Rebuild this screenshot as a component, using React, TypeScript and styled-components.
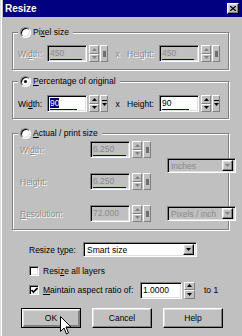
import React from "react";
import styled, { createGlobalStyle, css } from "styled-components";

const GlobalStyle = createGlobalStyle`
  html, body { margin: 0; padding: 0; background: #c0c0c0; }
  body { font-family: "Liberation Sans", Arial, sans-serif; font-size: 8.5px; color: #000; }
  * { box-sizing: border-box; }
`;

const raised = css`
  background: #c0c0c0;
  border: 1px solid;
  border-color: #fff #000 #000 #fff;
  box-shadow: inset -1px -1px 0 #808080, inset 1px 1px 0 #dfdfdf;
`;

const raisedThin = css`
  background: #c0c0c0;
  border: 1px solid;
  border-color: #fff #808080 #808080 #fff;
`;

const sunken = css`
  border: 1px solid;
  border-color: #808080 #fff #fff #808080;
  box-shadow: inset 1px 1px 0 #000, inset -1px -1px 0 #dfdfdf;
`;

const disabledText = css`
  color: #8a8a8a;
  text-shadow: 1px 1px 0 #fff;
`;

const Arrow = ({ dir, off }: { dir: "up" | "down"; off?: boolean }) => (
  <svg width="5" height="3" viewBox="0 0 5 3">
    <polygon
      points={dir === "up" ? "2.5,0 5,3 0,3" : "0,0 5,0 2.5,3"}
      fill={off ? "#808080" : "#000"}
    />
  </svg>
);

const Window = styled.div`
  position: relative;
  width: 242px;
  height: 336px;
  background: #c0c0c0;
  border-left: 1px solid #dfdfdf;
  box-shadow: inset 1px 0 0 #fff;
  padding-left: 2px;
  overflow: hidden;
`;

const TitleBar = styled.div`
  height: 17px;
  background: #000080;
  color: #fff;
  display: flex;
  align-items: center;
  justify-content: space-between;
  padding: 0 3px 0 2px;
  font-weight: bold;
  font-size: 10px;
`;

const CloseBtn = styled.div`
  ${raised};
  width: 12px;
  height: 11px;
  display: flex;
  align-items: center;
  justify-content: center;
`;

const Content = styled.div`
  padding: 0 13px 0 9px;
  display: flex;
  flex-direction: column;
`;

const Group = styled.fieldset<{ $mt: number; $pt: number; $pb: number }>`
  margin: ${(p) => p.$mt}px 0 0;
  padding: ${(p) => p.$pt}px 8px ${(p) => p.$pb}px 5px;
  border: 1px solid #808080;
  box-shadow: inset 1px 1px 0 #fff, 1px 1px 0 #fff;
  min-width: 0;
`;

const Legend = styled.legend`
  padding: 0 4px 0 2px;
  background: #c0c0c0;
  height: 12px;
`;

const LegendInner = styled.span`
  display: flex;
  align-items: center;
  gap: 2px;
  height: 12px;
  line-height: 12px;
`;

const Radio = styled.span<{ $checked?: boolean }>`
  width: 11px;
  height: 11px;
  border-radius: 50%;
  background: #fff;
  border: 1px solid;
  border-color: #808080 #fff #fff #808080;
  box-shadow: inset 1px 1px 0 #000, inset -1px -1px 0 #dfdfdf;
  display: flex;
  align-items: center;
  justify-content: center;
  &::after {
    content: "";
    width: 3px;
    height: 3px;
    border-radius: 50%;
    background: #000;
    display: ${(p) => (p.$checked ? "block" : "none")};
  }
`;

const Row = styled.div`
  display: flex;
  align-items: center;
  height: 17px;
`;

const Label = styled.span<{ $w: number; $off?: boolean; $pl?: number }>`
  width: ${(p) => p.$w}px;
  padding-left: ${(p) => p.$pl ?? 0}px;
  white-space: nowrap;
  ${(p) => p.$off && disabledText};
`;

const Times = styled.span<{ $off?: boolean }>`
  width: 19px;
  text-align: center;
  ${(p) => p.$off && disabledText};
`;

const NumWrap = styled.div`
  display: flex;
  align-items: stretch;
  height: 17px;
`;

const Edit = styled.div<{ $w: number; $off?: boolean }>`
  ${sunken};
  width: ${(p) => p.$w}px;
  background: ${(p) => (p.$off ? "#c0c0c0" : "#fff")};
  display: flex;
  flex-direction: column;
  justify-content: space-between;
  padding: 2px 1px 1px 2px;
  line-height: 11px;
  ${(p) => p.$off && "color: #8a8a8a;"};
`;

const Selected = styled.span`
  background: #000080;
  color: #fff;
`;

const Bar = styled.div`
  height: 2px;
  background: #000080;
`;

const Spinner = styled.div<{ $w: number }>`
  width: ${(p) => p.$w}px;
  margin-left: 2px;
  display: flex;
  flex-direction: column;
`;

const SpinBtn = styled.div`
  ${raisedThin};
  flex: 1;
  display: flex;
  align-items: center;
  justify-content: center;
`;

const MoreBtn = styled.div`
  ${raisedThin};
  width: 8px;
  margin-left: 1px;
  display: flex;
  align-items: center;
  justify-content: center;
`;

const Grid3 = styled.div`
  display: grid;
  grid-template-columns: 56px 61px 69px;
  grid-template-rows: 17px 17px 17px;
  column-gap: 16px;
  row-gap: 15px;
  align-items: center;
`;

const Combo = styled.div<{ $w: number; $off?: boolean; $span?: boolean }>`
  ${sunken};
  width: ${(p) => p.$w}px;
  height: 15px;
  background: ${(p) => (p.$off ? "#c0c0c0" : "#fff")};
  display: flex;
  align-items: center;
  justify-content: space-between;
  padding: 2px 2px 2px 3px;
  ${(p) => p.$off && "color: #8a8a8a;"};
  ${(p) => p.$span && "grid-column: 3; grid-row: 1 / 3; align-self: center;"};
`;

const ComboBtn = styled.div`
  ${raised};
  width: 11px;
  height: 11px;
  display: flex;
  align-items: center;
  justify-content: center;
`;

const OptRow = styled.div<{ $mt: number; $h: number }>`
  margin-top: ${(p) => p.$mt}px;
  height: ${(p) => p.$h}px;
  padding-left: 17px;
  display: flex;
  align-items: center;
`;

const Check = styled.span`
  ${sunken};
  width: 10px;
  height: 10px;
  background: #fff;
  margin-right: 4px;
  display: flex;
  align-items: center;
  justify-content: center;
`;

const ToOne = styled.span`
  margin-left: 9px;
`;

const Buttons = styled.div`
  margin-top: 10px;
  padding-left: 9px;
  display: flex;
  gap: 11px;
`;

const Button = styled.div<{ $default?: boolean }>`
  width: 60px;
  height: 20px;
  display: flex;
  align-items: center;
  justify-content: center;
  ${raised};
  ${(p) =>
    p.$default &&
    css`
      border: 1px solid #000;
      box-shadow: inset 1px 1px 0 #fff, inset -1px -1px 0 #808080,
        inset 2px 2px 0 #dfdfdf, inset -2px -2px 0 #808080;
    `};
`;

const Cursor = styled.svg`
  position: absolute;
  left: 59px;
  top: 316px;
`;

type NumProps = { value: string; off?: boolean; bar?: number; sel?: boolean; w?: number; more?: boolean };

const NumField = ({ value, off, bar = 0, sel, w = 40, more = true }: NumProps) => (
  <NumWrap>
    <Edit $w={w} $off={off}>
      <span>{sel ? <Selected>{value}</Selected> : value}</span>
      <Bar style={{ width: `${bar}%` }} />
    </Edit>
    <Spinner $w={more ? 10 : 11}>
      <SpinBtn>
        <Arrow dir="up" off={off} />
      </SpinBtn>
      <SpinBtn>
        <Arrow dir="down" off={off} />
      </SpinBtn>
    </Spinner>
    {more && (
      <MoreBtn>
        {off ? (
          <svg width="3" height="6">
            <rect width="3" height="6" fill="#6e6e6e" />
          </svg>
        ) : (
          <svg width="5" height="7" viewBox="0 0 5 7">
            <rect x="0" y="0" width="5" height="1" fill="#000" />
            <polygon points="0,3 5,3 2.5,6" fill="#000" />
          </svg>
        )}
      </MoreBtn>
    )}
  </NumWrap>
);

const App = () => {
  return (
    <Window>
      <GlobalStyle />
      <TitleBar>
        <span>Resize</span>
        <CloseBtn>
          <svg width="6" height="5" viewBox="0 0 6 5">
            <path d="M0 0 L6 5 M6 0 L0 5" stroke="#000" strokeWidth="1.3" />
          </svg>
        </CloseBtn>
      </TitleBar>
      <Content>
        <Group $mt={9} $pt={7} $pb={7}>
          <Legend>
            <LegendInner>
              <Radio />
              <span>
                Pi<u>x</u>el size
              </span>
            </LegendInner>
          </Legend>
          <Row>
            <Label $w={29} $off>
              Wi<u>d</u>th:
            </Label>
            <NumField value="450" off bar={92} />
            <Times $off>x</Times>
            <Label $w={32} $off>
              Hei<u>g</u>ht:
            </Label>
            <NumField value="450" off bar={92} />
          </Row>
        </Group>

        <Group $mt={5} $pt={8} $pb={6}>
          <Legend>
            <LegendInner>
              <Radio $checked />
              <span>
                <u>P</u>ercentage of original
              </span>
            </LegendInner>
          </Legend>
          <Row>
            <Label $w={29}>
              Wi<u>d</u>th:
            </Label>
            <NumField value="90" sel bar={78} />
            <Times>x</Times>
            <Label $w={32}>
              Hei<u>g</u>ht:
            </Label>
            <NumField value="90" bar={78} />
          </Row>
        </Group>

        <Group $mt={8} $pt={2} $pb={7}>
          <Legend>
            <LegendInner>
              <Radio />
              <span>
                <u>A</u>ctual / print size
              </span>
            </LegendInner>
          </Legend>
          <Grid3>
            <Label $w={56} $off $pl={2}>
              Wi<u>d</u>th:
            </Label>
            <NumField value="6.250" off bar={95} />
            <Combo $w={69} $off $span>
              <span>Inches</span>
              <ComboBtn>
                <Arrow dir="down" off />
              </ComboBtn>
            </Combo>
            <Label $w={56} $off $pl={2}>
              Hei<u>g</u>ht:
            </Label>
            <NumField value="6.250" off bar={95} />
            <Label $w={56} $off $pl={2}>
              <u>R</u>esolution:
            </Label>
            <NumField value="72.000" off bar={0} />
            <Combo $w={69} $off>
              <span>Pixels / inch</span>
              <ComboBtn>
                <Arrow dir="down" off />
              </ComboBtn>
            </Combo>
          </Grid3>
        </Group>

        <OptRow $mt={12} $h={15}>
          <Label $w={54}>
            Resize t<u>y</u>pe:
          </Label>
          <Combo $w={114}>
            <span>Smart size</span>
            <ComboBtn>
              <Arrow dir="down" />
            </ComboBtn>
          </Combo>
        </OptRow>

        <OptRow $mt={9} $h={10}>
          <Check />
          <span>
            Resi<u>z</u>e all layers
          </span>
        </OptRow>

        <OptRow $mt={6} $h={16}>
          <Check>
            <svg width="7" height="7" viewBox="0 0 7 7">
              <path d="M0.5 3 L2.5 5 L6.5 1" stroke="#000" strokeWidth="1.6" fill="none" />
            </svg>
          </Check>
          <Label $w={97}>
            <u>M</u>aintain aspect ratio of:
          </Label>
          <NumField value="1.0000" w={42} more={false} />
          <ToOne>to 1</ToOne>
        </OptRow>

        <Buttons>
          <Button $default>OK</Button>
          <Button>Cancel</Button>
          <Button>Help</Button>
        </Buttons>
      </Content>
      <Cursor width="12" height="19" viewBox="0 0 12 19">
        <path
          d="M0.5 0.5 L0.5 15.5 L4 12 L6.5 18 L8.5 17 L6 11 L11 11 Z"
          fill="#fff"
          stroke="#000"
          strokeWidth="1"
        />
      </Cursor>
    </Window>
  );
};

export default App;
